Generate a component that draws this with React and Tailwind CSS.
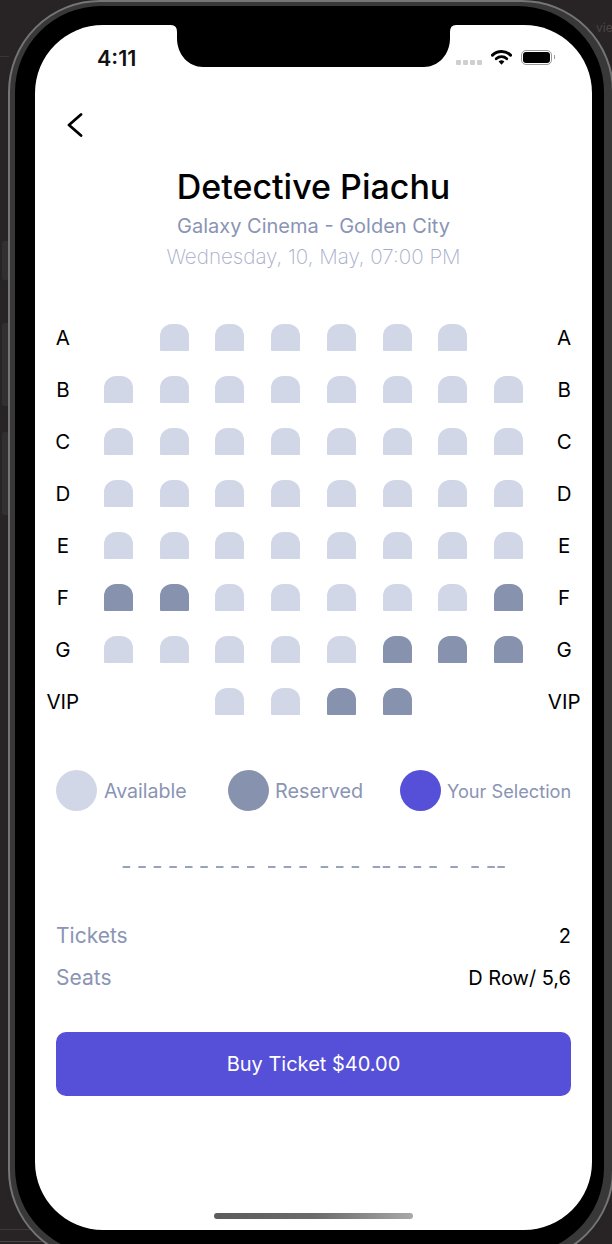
const rows = [
  ['A', ' aaaaaa '],
  ['B', 'aaaaaaaa'],
  ['C', 'aaaaaaaa'],
  ['D', 'aaaaaaaa'],
  ['E', 'aaaaaaaa'],
  ['F', 'rraaaaar'],
  ['G', 'aaaaarrr'],
  ['VIP', '  aarr  '],
];

const dashes = [68,115,161,208,255,301,348,394,441,504,551,598,662,708,755,818,848,895,941,988,1051,1114,1162,1192];

function Seat({ kind }) {
  if (kind === ' ') return <div />;
  return (
    <div className="flex items-center justify-center">
      <div className={kind === 'r' ? 'w-[29px] h-[27px] rounded-t-[12px] rounded-b-[1px] bg-[#8793ae]' : 'w-[29px] h-[27px] rounded-t-[12px] rounded-b-[1px] bg-[#d2d7e8]'} />
    </div>
  );
}

function Legend({ color, label, textClass, className }) {
  return (
    <div className={className}>
      <div className={color} />
      <span className={textClass}>{label}</span>
    </div>
  );
}

function RowLabel({ children }) {
  return <div className="flex items-center justify-center pt-[2px] text-[20.5px] text-black">{children}</div>;
}

export default function App() {
  return (
    <div className="relative w-[612px] h-[1244px] overflow-hidden bg-[#282324] font-['Inter','Noto_Sans',sans-serif]">
      <div className="absolute left-0 top-[56px] w-[9px] h-px bg-[#3a3637]" />
      <div className="absolute left-0 bottom-[14px] w-[50px] h-px bg-[#3d393a]" />
      <div className="absolute left-0 bottom-[2px] w-[50px] h-px bg-[#4a4647]" />
      <span className="absolute left-[596px] top-[20px] text-[12px] leading-[16px] text-[#4a4647]">vie</span>
      <div className="absolute left-[2px] top-[241px] w-[8px] h-[39px] rounded-l-[2px] bg-[#312f30]" />
      <div className="absolute left-[2px] top-[323px] w-[8px] h-[83px] rounded-l-[2px] bg-[#312f30]" />
      <div className="absolute left-[2px] top-[432px] w-[8px] h-[83px] rounded-l-[2px] bg-[#312f30]" />

      <div className="relative ml-[8px] w-[606px] h-[1262px] rounded-[92px] border-2 border-[#757575] bg-[#383838] pt-[4px] pl-[5px] pr-[8px] pb-[6px]">
        <div className="h-full rounded-[86px] bg-black pt-[19px] pl-[20px] pr-[11px]">
          <div className="relative w-[557px] h-[1205px] rounded-[68px] bg-white overflow-hidden flex flex-col">
            <svg className="absolute left-[136px] top-0" width="285" height="42" viewBox="0 0 285 42">
              <path d="M0 0H285Q279 0 279 7V13C279 30 267 42 253 42H32C18 42 6 30 6 13V7Q6 0 0 0Z" fill="#000" />
            </svg>

            <div className="flex items-center justify-between pt-[21px] pl-[62px] pr-[37px] h-[43px]">
              <span className="mt-[1px] text-[21.5px] leading-[22px] font-semibold text-[#111]">4:11</span>
              <div className="flex items-center">
                <div className="flex gap-[2px] mt-[10px]">
                  <div className="w-[5px] h-[5px] rounded-[1px] bg-[#cfcfcf]" />
                  <div className="w-[5px] h-[5px] rounded-[1px] bg-[#cfcfcf]" />
                  <div className="w-[5px] h-[5px] rounded-[1px] bg-[#cfcfcf]" />
                  <div className="w-[5px] h-[5px] rounded-[1px] bg-[#cfcfcf]" />
                </div>
                <svg className="ml-[9px]" width="21" height="16" viewBox="0 0 21 16">
                  <path d="M1.5 6.2A13 13 0 0 1 19.5 6.2" fill="none" stroke="#000" strokeWidth="3" strokeLinecap="round" />
                  <path d="M5.2 9.7A7.8 7.8 0 0 1 15.8 9.7" fill="none" stroke="#000" strokeWidth="2.8" strokeLinecap="round" />
                  <path d="M7.6 12.6A4.2 4.2 0 0 1 13.4 12.6L10.5 15.8Z" fill="#000" />
                </svg>
                <div className="ml-[9px] w-[31px] h-[15px] rounded-[5px] border border-[#9a9a9a] p-[1px]">
                  <div className="w-full h-full rounded-[3px] bg-black" />
                </div>
                <div className="ml-[2px] w-[1px] h-[4px] bg-[#9a9a9a]" />
              </div>
            </div>

            <svg className="ml-[31px] mt-[45px] shrink-0" width="18" height="24" viewBox="0 0 18 24">
              <path d="M15 1.5L3 12L15 22.5" fill="none" stroke="#000" strokeWidth="2.8" strokeLinecap="round" strokeLinejoin="round" />
            </svg>

            <h1 className="mt-[30px] text-center text-[34px] leading-[40px] font-medium text-black">Detective Piachu</h1>
            <p className="mt-[5px] text-center text-[20px] leading-[28px] text-[#8a94b4]">Galaxy Cinema - Golden City</p>
            <p className="mt-[3px] text-center text-[20.6px] leading-[28px] font-extralight text-[#a5adc9]">Wednesday, 10, May, 07:00 PM</p>

            <div className="mt-[40px] grid grid-cols-10 auto-rows-[52px]">
              {rows.map(([label, seats]) => (
                <div key={label} className="contents">
                  <RowLabel>{label}</RowLabel>
                  {seats.split('').map((k, i) => <Seat key={i} kind={k} />)}
                  <RowLabel>{label}</RowLabel>
                </div>
              ))}
            </div>

            <div className="mt-[43px] px-[21px] flex items-center">
              <Legend className="flex items-center" color="w-[41px] h-[41px] rounded-full bg-[#d2d7e8]" label="Available" textClass="ml-[7px] w-[82px] whitespace-nowrap text-[19.6px] leading-[28px] text-[#8a94b4]" />
              <Legend className="flex items-center ml-[42px]" color="w-[41px] h-[41px] rounded-full bg-[#8793ae]" label="Reserved" textClass="ml-[6px] w-[87px] whitespace-nowrap text-[19.8px] leading-[28px] text-[#8a94b4]" />
              <Legend className="flex items-center ml-[38px]" color="w-[41px] h-[41px] rounded-full bg-[#5650d8]" label="Your Selection" textClass="ml-[6px] whitespace-nowrap text-[18.2px] leading-[28px] text-[#8a94b4]" />
            </div>

            <svg className="mt-[54px] ml-[65px] shrink-0" width="420" height="4" viewBox="0 0 420 4">
              {dashes.map((x) => <rect key={x} x={x / 3} y="1" width="7.5" height="2" fill="#98a1bd" />)}
            </svg>

            <div className="mt-[52px] px-[21px] flex items-center justify-between text-[21px] leading-[30px]">
              <span className="text-[#8a94b4]">Tickets</span>
              <span className="text-[20px] text-black">2</span>
            </div>
            <div className="mt-[12px] px-[21px] flex items-center justify-between text-[21px] leading-[30px]">
              <span className="text-[#8a94b4]">Seats</span>
              <span className="text-[20px] text-black">D Row/ 5,6</span>
            </div>

            <button className="mx-[21px] mt-[39px] h-[64px] rounded-[10px] bg-[#5650d8] text-white text-[20px]">Buy Ticket $40.00</button>

            <div className="mt-auto mb-[11px] ml-[179px] w-[199px] h-[6px] rounded-full bg-gradient-to-r from-[#5c5c5c] via-[#6a6a6a] to-[#a8a8a8]" />
          </div>
        </div>
      </div>
    </div>
  );
}
